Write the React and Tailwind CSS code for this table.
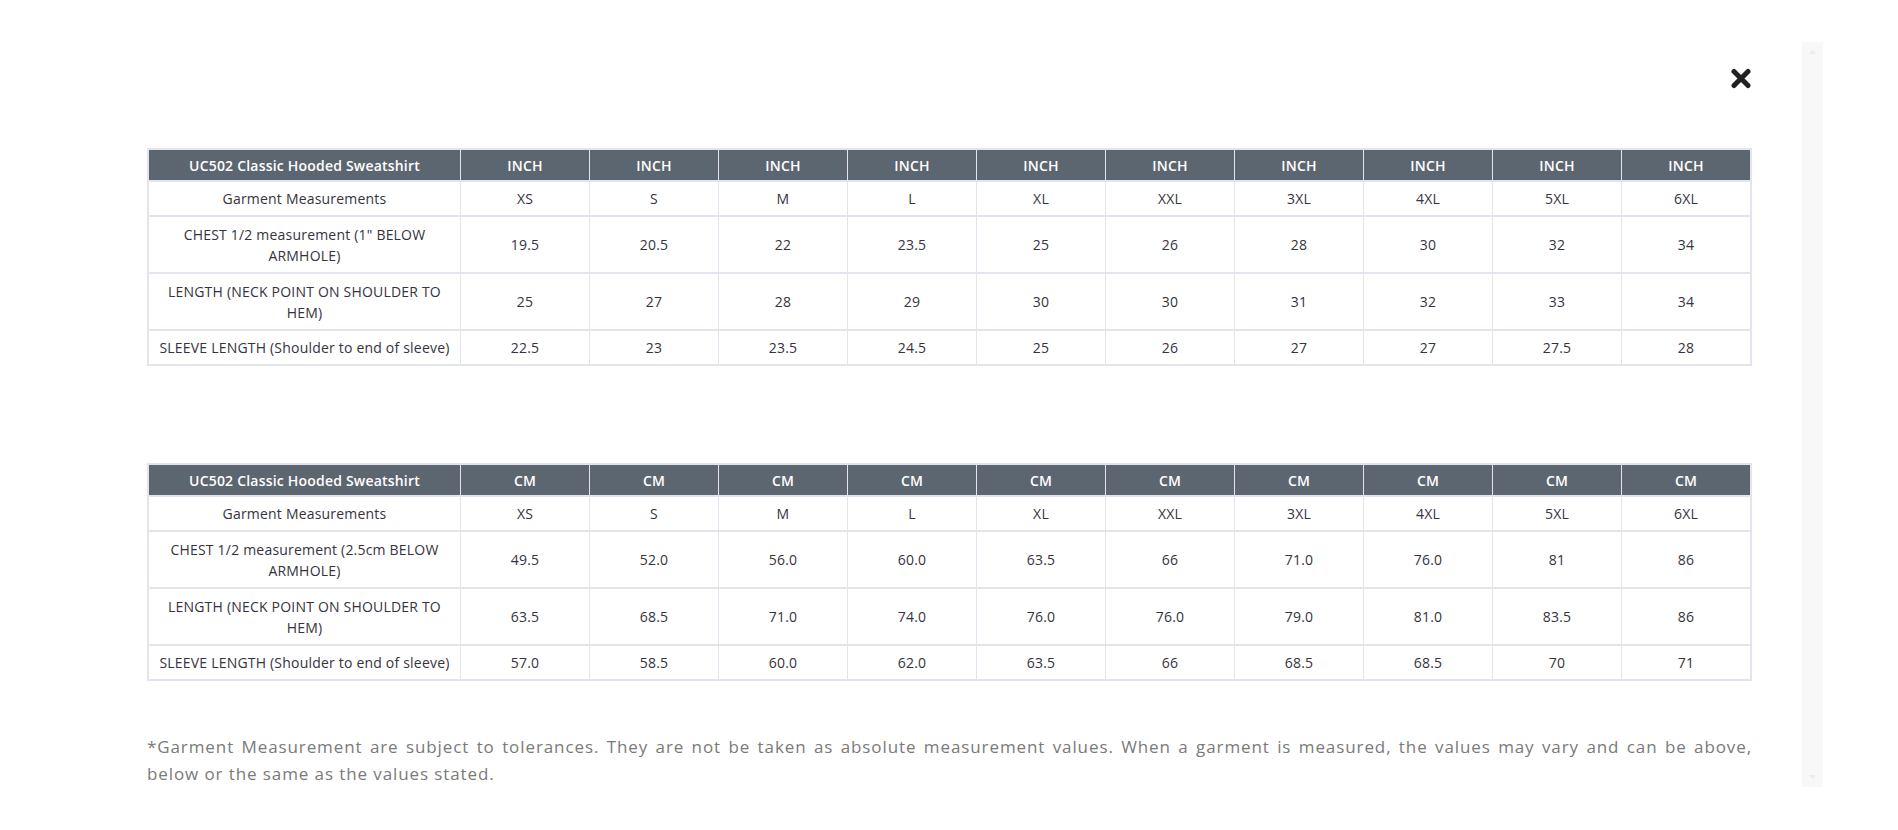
import React from "react";

const sizes = ["XS", "S", "M", "L", "XL", "XXL", "3XL", "4XL", "5XL", "6XL"];

const inchRows = [
  { label: ["CHEST 1/2 measurement (1\" BELOW", "ARMHOLE)"], vals: ["19.5", "20.5", "22", "23.5", "25", "26", "28", "30", "32", "34"] },
  { label: ["LENGTH (NECK POINT ON SHOULDER TO", "HEM)"], vals: ["25", "27", "28", "29", "30", "30", "31", "32", "33", "34"] },
  { label: ["SLEEVE LENGTH (Shoulder to end of sleeve)"], vals: ["22.5", "23", "23.5", "24.5", "25", "26", "27", "27", "27.5", "28"] },
];

const cmRows = [
  { label: ["CHEST 1/2 measurement (2.5cm BELOW", "ARMHOLE)"], vals: ["49.5", "52.0", "56.0", "60.0", "63.5", "66", "71.0", "76.0", "81", "86"] },
  { label: ["LENGTH (NECK POINT ON SHOULDER TO", "HEM)"], vals: ["63.5", "68.5", "71.0", "74.0", "76.0", "76.0", "79.0", "81.0", "83.5", "86"] },
  { label: ["SLEEVE LENGTH (Shoulder to end of sleeve)"], vals: ["57.0", "58.5", "60.0", "62.0", "63.5", "66", "68.5", "68.5", "70", "71"] },
];

function Cell({ children, head, h }) {
  return (
    <div
      className={
        (head
          ? "bg-[#5c6670] text-white font-semibold tracking-[0.2px] "
          : "bg-white text-[#35333d] tracking-[0.2px] ") +
        "flex items-center justify-center text-center text-[14px] leading-[21px] whitespace-nowrap " +
        h
      }
    >
      {children}
    </div>
  );
}

function SizeTable({ unit, rows }) {
  return (
    <div className="grid grid-cols-[311px_repeat(10,128px)] gap-x-px gap-y-[2px] bg-[#e3e4ef] p-[2px] w-[1605px]">
      <Cell head h="h-[30px]">UC502 Classic Hooded Sweatshirt</Cell>
      {sizes.map((s, i) => (
        <Cell key={"h" + i} head h="h-[30px]">{unit}</Cell>
      ))}
      <Cell h="h-[33px]">Garment Measurements</Cell>
      {sizes.map((s, i) => (
        <Cell key={"s" + i} h="h-[33px]">{s}</Cell>
      ))}
      {rows.map((r, ri) => {
        const h = r.label.length > 1 ? "h-[55px]" : "h-[33px]";
        return (
          <React.Fragment key={ri}>
            <Cell h={h}>
              <span>
                {r.label[0]}
                {r.label[1] && (
                  <>
                    <br />
                    {r.label[1]}
                  </>
                )}
              </span>
            </Cell>
            {r.vals.map((v, vi) => (
              <Cell key={vi} h={h}>{v}</Cell>
            ))}
          </React.Fragment>
        );
      })}
    </div>
  );
}

export default function App() {
  return (
    <div
      className="w-[1898px] h-[830px] bg-white flex pl-[147px] gap-[50px] overflow-hidden"
      style={{ fontFamily: '"Open Sans", "Noto Sans", sans-serif' }}
    >
      <div className="flex flex-col w-[1605px]">
        <div className="flex justify-end pt-[68px]">
          <svg width="22" height="21" viewBox="0 0 22 21">
            <path d="M4 3.5 L18 17.5 M18 3.5 L4 17.5" stroke="#222" strokeWidth="5" strokeLinecap="round" />
          </svg>
        </div>
        <div className="mt-[59px]">
          <SizeTable unit="INCH" rows={inchRows} />
        </div>
        <div className="mt-[97px]">
          <SizeTable unit="CM" rows={cmRows} />
        </div>
        <div className="mt-[52px] text-[17px] leading-[27px] tracking-[0.9px] text-[#7a7a7a]">
          <div className="text-justify [text-align-last:justify] whitespace-nowrap">
            *Garment Measurement are subject to tolerances. They are not be taken as absolute measurement values. When a garment is measured, the values may vary and can be above,
          </div>
          <div>below or the same as the values stated.</div>
        </div>
      </div>
      <div className="mt-[42px] h-[745px] w-[21px] bg-[#f8f8f8] flex flex-col items-center justify-between py-[8px]">
        <svg width="7" height="4" viewBox="0 0 7 4"><path d="M0 4 L3.5 0 L7 4 Z" fill="#ececec" /></svg>
        <svg width="7" height="4" viewBox="0 0 7 4"><path d="M0 0 L3.5 4 L7 0 Z" fill="#ececec" /></svg>
      </div>
    </div>
  );
}
